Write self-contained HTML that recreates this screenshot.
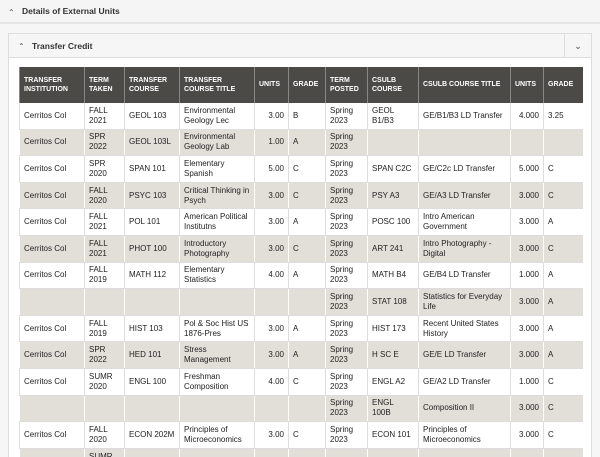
<!DOCTYPE html><html><head><style>
html,body{margin:0;width:600px;height:457px;overflow:hidden;}
body{background:#f6f6f6;font-family:"Liberation Sans",Arial,sans-serif;position:relative}
.top{height:22px;border-bottom:2px solid #e6e6e6;background:#f5f5f5;font-size:8.5px;font-weight:bold;color:#333;line-height:23px;padding-left:22px;position:relative}
.chev{position:absolute;font-size:8px;font-weight:normal;color:#555}
.panel{position:absolute;left:8px;top:33px;width:582px;height:440px;background:#fff;border:1px solid #ddd}
.ph{height:23px;background:#f6f6f6;border-bottom:1px solid #ddd;font-size:8.5px;font-weight:bold;color:#333;line-height:24px;padding-left:23px;position:relative}
.cb{position:absolute;right:0;top:0;width:26px;height:23px;border-left:1px solid #ddd;text-align:center;color:#777}
table{position:absolute;left:10px;top:33px;border-collapse:collapse;font-size:8px;color:#222;table-layout:fixed;width:563px}
th{background:#4b4a47;color:#fff;font-size:7px;text-align:left;padding:0 4px;height:36px;border-left:1px solid #888;line-height:9.5px}
td{height:25.6px;padding:0 4px;border-left:1px solid #ddd;border-bottom:1px solid #ddd;line-height:10px}
tr.g td{background:#e2dfd8;border-left-color:#fff}
td.r{text-align:right}
</style></head><body>
<div class="top"><span class="chev" style="left:8px;top:1px">&#8963;</span>Details of External Units</div>
<div class="panel"><div class="ph"><span class="chev" style="left:9px;top:1px">&#8963;</span>Transfer Credit<div class="cb">&#8964;</div></div>
<table>
<colgroup><col style="width:65px"><col style="width:40px"><col style="width:55px"><col style="width:75px"><col style="width:34px"><col style="width:37px"><col style="width:42px"><col style="width:51px"><col style="width:92px"><col style="width:33px"><col style="width:39px"></colgroup>
<tr><th>TRANSFER INSTITUTION</th><th>TERM TAKEN</th><th>TRANSFER COURSE</th><th>TRANSFER COURSE TITLE</th><th>UNITS</th><th>GRADE</th><th>TERM POSTED</th><th>CSULB COURSE</th><th>CSULB COURSE TITLE</th><th>UNITS</th><th>GRADE</th></tr>
<tr><td>Cerritos Col</td><td>FALL 2021</td><td>GEOL 103</td><td>Environmental Geology Lec</td><td class="r">3.00</td><td>B</td><td>Spring 2023</td><td>GEOL B1/B3</td><td>GE/B1/B3 LD Transfer</td><td class="r">4.000</td><td>3.25</td></tr>
<tr class="g"><td>Cerritos Col</td><td>SPR 2022</td><td>GEOL 103L</td><td>Environmental Geology Lab</td><td class="r">1.00</td><td>A</td><td>Spring 2023</td><td></td><td></td><td></td><td></td></tr>
<tr><td>Cerritos Col</td><td>SPR 2020</td><td>SPAN 101</td><td>Elementary Spanish</td><td class="r">5.00</td><td>C</td><td>Spring 2023</td><td>SPAN C2C</td><td>GE/C2c LD Transfer</td><td class="r">5.000</td><td>C</td></tr>
<tr class="g"><td>Cerritos Col</td><td>FALL 2020</td><td>PSYC 103</td><td>Critical Thinking in Psych</td><td class="r">3.00</td><td>C</td><td>Spring 2023</td><td>PSY A3</td><td>GE/A3 LD Transfer</td><td class="r">3.000</td><td>C</td></tr>
<tr><td>Cerritos Col</td><td>FALL 2021</td><td>POL 101</td><td>American Political Institutns</td><td class="r">3.00</td><td>A</td><td>Spring 2023</td><td>POSC 100</td><td>Intro American Government</td><td class="r">3.000</td><td>A</td></tr>
<tr class="g"><td>Cerritos Col</td><td>FALL 2021</td><td>PHOT 100</td><td>Introductory Photography</td><td class="r">3.00</td><td>C</td><td>Spring 2023</td><td>ART 241</td><td>Intro Photography - Digital</td><td class="r">3.000</td><td>C</td></tr>
<tr><td>Cerritos Col</td><td>FALL 2019</td><td>MATH 112</td><td>Elementary Statistics</td><td class="r">4.00</td><td>A</td><td>Spring 2023</td><td>MATH B4</td><td>GE/B4 LD Transfer</td><td class="r">1.000</td><td>A</td></tr>
<tr class="g"><td></td><td></td><td></td><td></td><td></td><td></td><td>Spring 2023</td><td>STAT 108</td><td>Statistics for Everyday Life</td><td class="r">3.000</td><td>A</td></tr>
<tr><td>Cerritos Col</td><td>FALL 2019</td><td>HIST 103</td><td>Pol &amp; Soc Hist US 1876-Pres</td><td class="r">3.00</td><td>A</td><td>Spring 2023</td><td>HIST 173</td><td>Recent United States History</td><td class="r">3.000</td><td>A</td></tr>
<tr class="g"><td>Cerritos Col</td><td>SPR 2022</td><td>HED 101</td><td>Stress Management</td><td class="r">3.00</td><td>A</td><td>Spring 2023</td><td>H SC E</td><td>GE/E LD Transfer</td><td class="r">3.000</td><td>A</td></tr>
<tr><td>Cerritos Col</td><td>SUMR 2020</td><td>ENGL 100</td><td>Freshman Composition</td><td class="r">4.00</td><td>C</td><td>Spring 2023</td><td>ENGL A2</td><td>GE/A2 LD Transfer</td><td class="r">1.000</td><td>C</td></tr>
<tr class="g"><td></td><td></td><td></td><td></td><td></td><td></td><td>Spring 2023</td><td>ENGL 100B</td><td>Composition II</td><td class="r">3.000</td><td>C</td></tr>
<tr><td>Cerritos Col</td><td>FALL 2020</td><td>ECON 202M</td><td>Principles of Microeconomics</td><td class="r">3.00</td><td>C</td><td>Spring 2023</td><td>ECON 101</td><td>Principles of Microeconomics</td><td class="r">3.000</td><td>C</td></tr>
<tr class="g"><td></td><td>SUMR 2020</td><td>COUN</td><td>Orientation to</td><td></td><td></td><td>Spring</td><td></td><td></td><td></td><td></td></tr>
</table></div>
</body></html>
